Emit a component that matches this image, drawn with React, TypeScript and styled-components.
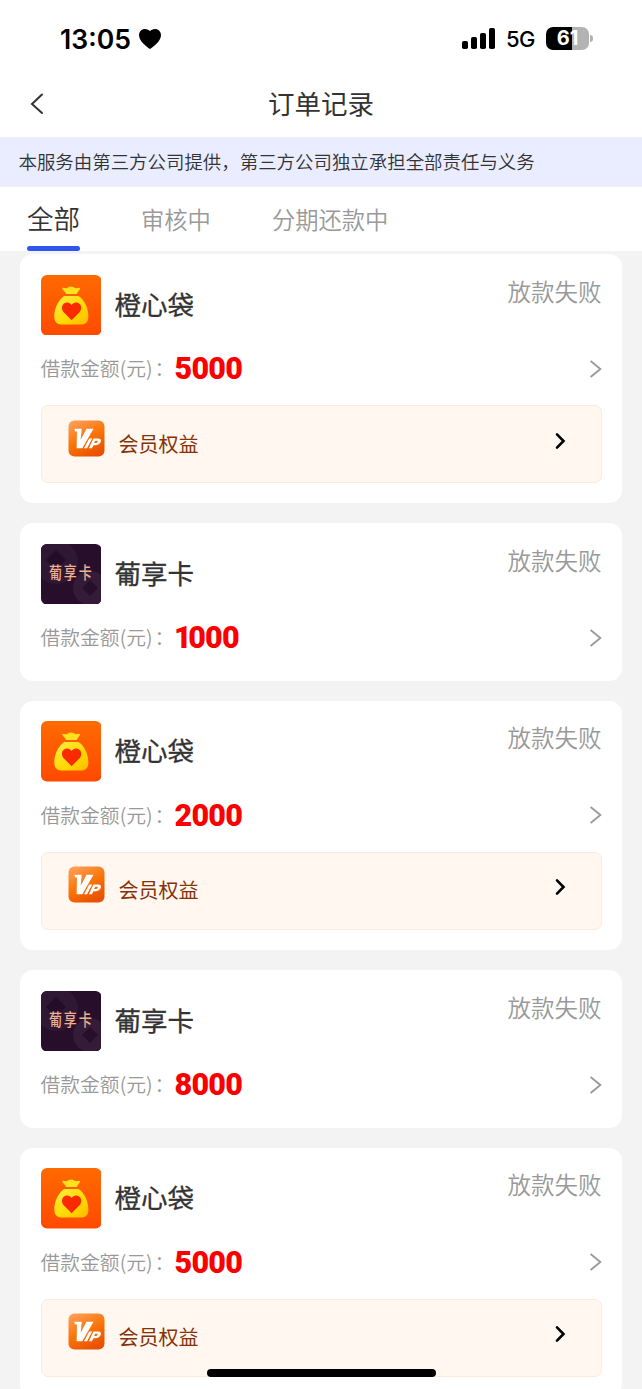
import React from "react";
import styled, { createGlobalStyle } from "styled-components";

const GlobalStyle = createGlobalStyle`
  * { box-sizing: border-box; }
  html, body { margin: 0; padding: 0; background: #f3f3f3; }
  body {
    height: 1389px;
    overflow: hidden;
    font-family: "Noto Sans CJK SC", sans-serif;
    color: #333;
  }
`;

const Screen = styled.div`
  position: relative;
  width: 642px;
  height: 1389px;
  overflow: hidden;
  background: #f3f3f3;
`;

const StatusBar = styled.header`
  display: flex;
  align-items: center;
  height: 76px;
  padding: 0 49px 0 60px;
  background: #fff;
  color: #000;
  font-family: Inter, sans-serif;
`;

const Clock = styled.span`
  width: 71px;
  padding-top: 2px;
  font-size: 26.6px;
  font-weight: 600;
  line-height: 32px;
  white-space: nowrap;
`;

const Heart = styled.svg`
  margin: 1px 0 0 8px;
`;

const Signal = styled.svg`
  margin-left: auto;
`;

const Network = styled.span`
  width: 29px;
  margin-left: 11px;
  font-size: 22px;
  font-weight: 500;
  line-height: 28px;
  letter-spacing: -0.6px;
  padding-top: 2px;
`;

const Battery = styled.div`
  display: flex;
  align-items: center;
  justify-content: center;
  width: 43px;
  height: 23px;
  margin-left: 11px;
  border-radius: 7px;
  background: linear-gradient(to right, #000 61%, #b3b3b3 61%);
  color: #fff;
  font-size: 20px;
  font-weight: 700;
  line-height: 23px;
`;

const BatteryTip = styled.span`
  width: 3px;
  height: 7px;
  margin-left: 1px;
  border-radius: 0 3px 3px 0;
  background: #b3b3b3;
`;

const TitleBar = styled.div`
  display: grid;
  grid-template-columns: 60px 1fr 60px;
  align-items: center;
  height: 61px;
  padding-bottom: 5px;
  background: #fff;
`;

const BackIcon = styled.svg`
  margin: 0 0 0 29px;
`;

const PageTitle = styled.h1`
  margin: -2px 0 0;
  text-align: center;
  font-size: 26.5px;
  font-weight: 400;
  line-height: 36px;
`;

const Notice = styled.div`
  height: 50px;
  padding-left: 18.5px;
  background: #e9edff;
  font-size: 18.45px;
  font-weight: 350;
  line-height: 49px;
  white-space: nowrap;
`;

const Tabs = styled.nav`
  display: flex;
  height: 64px;
  padding-left: 27px;
  background: #fff;
`;

const Tab = styled.div<{ $active?: boolean }>`
  display: flex;
  flex-direction: column;
  justify-content: space-between;
  height: 64px;
  margin-right: 61px;
  color: ${(p) => (p.$active ? "#333" : "#999")};
  font-size: ${(p) => (p.$active ? 26.5 : 23.3)}px;
  font-weight: 350;
  line-height: ${(p) => (p.$active ? 61 : 64)}px;
  white-space: nowrap;
`;

const Underline = styled.span`
  height: 5px;
  margin-top: -4px;
  border-radius: 3px;
  background: #2e55f0;
`;

const List = styled.main`
  display: flex;
  flex-direction: column;
  gap: 20px;
  padding: 3px 20px 0;
`;

const Card = styled.section<{ $tall: boolean }>`
  flex: none;
  height: ${(p) => (p.$tall ? 249.4 : 157.4)}px;
  padding: 20.5px;
  border-radius: 13px;
  background: #fff;
`;

const CardHead = styled.div`
  display: flex;
  height: 60.5px;
`;

const LogoSvg = styled.svg`
  display: block;
  flex: none;
`;

const GrapeLogo = styled.div`
  position: relative;
  display: flex;
  width: 60.5px;
  height: 60.5px;
`;

const GrapeText = styled.span`
  position: absolute;
  inset: 0;
  padding-left: 1px;
  color: #eeb08f;
  font-size: 13px;
  font-weight: 500;
  letter-spacing: 1.8px;
  line-height: 58px;
  text-align: center;
  white-space: nowrap;
  transform: scaleY(1.28);
`;

const Brand = styled.h2`
  margin: 0 0 0 13.5px;
  font-size: 26.5px;
  font-weight: 400;
  line-height: 58px;
  -webkit-text-stroke: 0.3px #333;
`;

const State = styled.span`
  margin-left: auto;
  color: #999;
  font-size: 23.5px;
  font-weight: 350;
  line-height: 32px;
`;

const AmountRow = styled.div`
  display: flex;
  align-items: center;
  height: 34px;
  margin-top: 17px;
`;

const AmountLabel = styled.span`
  width: 134px;
  color: #999;
  font-size: 19.8px;
  font-weight: 350;
  line-height: 32px;
  margin-top: -2px;
  white-space: nowrap;
`;

const Colon = styled.span`
  margin-left: 2px;
`;

const Amount = styled.strong`
  color: #fb0000;
  font-family: Roboto, sans-serif;
  font-size: 30.5px;
  font-weight: 900;
  line-height: 34px;
  letter-spacing: -0.8px;
`;

const NarrowDigit = styled.span`
  margin-left: -0.5px;
  letter-spacing: -3.5px;
`;

const RowArrow = styled.svg`
  margin: -1px 0 0 auto;
`;

const Benefit = styled.div`
  display: flex;
  align-items: center;
  height: 78px;
  margin-top: 19px;
  padding: 0 34px 0 26px;
  border: 1px solid #fdeadf;
  border-radius: 7px;
  background: #fff7f0;
`;

const VipIcon = styled.svg`
  margin-top: -12px;
`;

const BenefitText = styled.span`
  margin: -1px 0 0 14px;
  color: #853306;
  font-size: 20px;
  line-height: 30px;
`;

const BenefitArrow = styled.svg`
  margin: -7px 1px 0 auto;
`;

const HomeIndicator = styled.div`
  position: absolute;
  left: 207px;
  top: 1369px;
  width: 229px;
  height: 8px;
  border-radius: 4px;
  background: #000;
`;

function OrangeBagLogo() {
  return (
    <LogoSvg width="60.5" height="60.5" viewBox="0 0 60.5 60.5">
      <defs>
        <linearGradient id="bagBg" x1="0" y1="0" x2="0" y2="1">
          <stop offset="0" stopColor="#ff6a00" />
          <stop offset="1" stopColor="#ff4a00" />
        </linearGradient>
        <linearGradient id="bagFill" x1="0" y1="0" x2="1" y2="1">
          <stop offset="0" stopColor="#ffec45" />
          <stop offset="0.6" stopColor="#ffd900" />
          <stop offset="1" stopColor="#ffb800" />
        </linearGradient>
      </defs>
      <rect width="60.5" height="60.5" rx="6" fill="url(#bagBg)" />
      <path d="M21.3 13c1.4-.9 3.6 1 5.6-.4 1.8-1.6 4.4-1.6 6.6.2 1.8 1.2 3.4-1 5.4.2.8 1-1 2.4-2 4-.8 1.2-1.1 2.1-1.1 2.1H25.2s-.4-1.1-1.3-2.2c-1-1.3-3.3-2.8-2.6-3.9z" fill="#ffe11d" />
      <path d="M23.3 21h14.2c5.8 3.6 9.9 12.3 9.9 20.4 0 5.8-3.2 8.2-8.3 8.2H21.8c-5.3 0-8.5-2.4-8.5-8.2 0-8.1 4.2-16.8 10-20.4z" fill="url(#bagFill)" />
      <path d="M30.6 45.2L22.7 37.2c-2.4-2.5-2.2-6.4.1-8.4 2.5-2.2 6-1.6 7.8 1.2 1.8-2.8 5.3-3.4 7.8-1.2 2.4 2 2.5 5.9.1 8.4z" fill="#f92900" />
    </LogoSvg>
  );
}

function GrapeCardLogo() {
  return (
    <GrapeLogo>
      <LogoSvg width="60.5" height="60.5" viewBox="0 0 60.5 60.5">
        <defs>
          <clipPath id="grapeClip"><rect width="60.5" height="60.5" rx="6" /></clipPath>
        </defs>
        <g clipPath="url(#grapeClip)">
          <rect width="60.5" height="60.5" fill="#270f2b" />
          <circle cx="15" cy="18" r="22" fill="#2f1834" />
          <path d="M15 6l10 10-10 10L5 16z" fill="#240d29" />
          <circle cx="49" cy="44" r="17" fill="#341b37" />
          <path d="M49 36l8 8-8 8-8-8z" fill="#260f2b" />
        </g>
      </LogoSvg>
      <GrapeText>葡享卡</GrapeText>
    </GrapeLogo>
  );
}

function Vip() {
  return (
    <VipIcon width="37" height="37" viewBox="0 0 37 37">
      <defs>
        <linearGradient id="vipBg" x1="0.2" y1="0" x2="0.7" y2="1">
          <stop offset="0" stopColor="#ff9d55" />
          <stop offset="0.5" stopColor="#f87509" />
          <stop offset="1" stopColor="#e94f00" />
        </linearGradient>
      </defs>
      <rect x="0.5" y="0.5" width="36" height="36" rx="6" fill="url(#vipBg)" />
      <path d="M6.3 8.8h7.4l-1 11 5.8-11h7L14.3 28.3H8.6L9 11.6H7.2z" fill="#fff" />
      <path d="M21.2 18.4h3L19 28.3h-3z" fill="#fff" />
      <path fillRule="evenodd" d="M25.4 18.4h4.4c2.9 0 3.8 1.6 2.9 3.7-.9 2.1-2.8 3.1-5.2 3.1h-2l-1.6 3.1h-3zM27.2 20.8l-1 2.1h1.9c1.4 0 2.2-2.1.8-2.1z" fill="#fff" />
    </VipIcon>
  );
}

interface OrderProps {
  kind: "bag" | "grape";
  amount: string;
}

function Order({ kind, amount }: OrderProps) {
  const isBag = kind === "bag";
  return (
    <Card $tall={isBag}>
      <CardHead>
        {isBag ? <OrangeBagLogo /> : <GrapeCardLogo />}
        <Brand>{isBag ? "橙心袋" : "葡享卡"}</Brand>
        <State>放款失败</State>
      </CardHead>
      <AmountRow>
        <AmountLabel>
          借款金额(元)<Colon>：</Colon>
        </AmountLabel>
        <Amount>
          {amount.startsWith("1") ? (
            <>
              <NarrowDigit>1</NarrowDigit>
              {amount.slice(1)}
            </>
          ) : (
            amount
          )}
        </Amount>
        <RowArrow width="12" height="18" viewBox="0 0 12 18" fill="none" stroke="#999" strokeWidth="1.8">
          <path d="M.6 1l9.8 8L.6 17" />
        </RowArrow>
      </AmountRow>
      {isBag && (
        <Benefit>
          <Vip />
          <BenefitText>会员权益</BenefitText>
          <BenefitArrow width="11" height="18" viewBox="0 0 11 18" fill="none" stroke="#000" strokeWidth="2.6" strokeLinecap="round">
            <path d="M2 2.4L8.5 9 2 15.6" />
          </BenefitArrow>
        </Benefit>
      )}
    </Card>
  );
}

const orders: OrderProps[] = [
  { kind: "bag", amount: "5000" },
  { kind: "grape", amount: "1000" },
  { kind: "bag", amount: "2000" },
  { kind: "grape", amount: "8000" },
  { kind: "bag", amount: "5000" },
];

export default function App() {
  return (
    <Screen>
      <GlobalStyle />
      <StatusBar>
        <Clock>13:05</Clock>
        <Heart width="22" height="20" viewBox="0 0 22 20">
          <path d="M11 20C8.5 18.2 0 12.5 0 6.2 0 2.6 2.6 0 5.9 0 8.2 0 10 1 11 2.2 12 1 13.8 0 16.1 0 19.4 0 22 2.6 22 6.2c0 6.3-8.5 12-11 13.8z" />
        </Heart>
        <Signal width="33" height="21" viewBox="0 0 33 21">
          <rect x="0" y="13" width="6" height="8" rx="1.8" />
          <rect x="9" y="9" width="6" height="12" rx="1.8" />
          <rect x="18" y="5" width="6" height="16" rx="1.8" />
          <rect x="27" y="0" width="6" height="21" rx="1.8" />
        </Signal>
        <Network>5G</Network>
        <Battery>61</Battery>
        <BatteryTip />
      </StatusBar>
      <TitleBar>
        <BackIcon width="16" height="22" viewBox="0 0 16 22" fill="none" stroke="#333" strokeWidth="2" strokeLinecap="round">
          <path d="M13 1.5L3 11 13 20" />
        </BackIcon>
        <PageTitle>订单记录</PageTitle>
      </TitleBar>
      <Notice>本服务由第三方公司提供，第三方公司独立承担全部责任与义务</Notice>
      <Tabs>
        <Tab $active>
          全部
          <Underline />
        </Tab>
        <Tab>审核中</Tab>
        <Tab>分期还款中</Tab>
      </Tabs>
      <List>
        {orders.map((order, i) => (
          <Order key={i} {...order} />
        ))}
      </List>
      <HomeIndicator />
    </Screen>
  );
}
